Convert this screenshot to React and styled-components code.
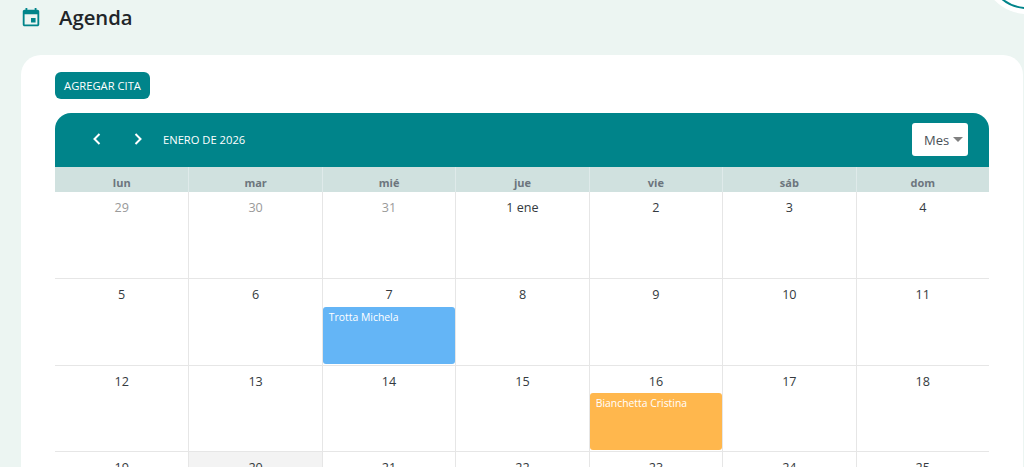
import React from "react";
import styled, { createGlobalStyle } from "styled-components";

const GlobalStyle = createGlobalStyle`
    html, body {
        margin: 0;
        height: 100%;
        overflow: hidden;
        background: #ecf5f2;
        font-family: "Open Sans", "Noto Sans", sans-serif;
    }
`

const Page = styled.div`
    position: relative;
    height: 467px;
    overflow: hidden;
    padding: 0 1px 0 21px;
`

const TopBar = styled.div`
    height: 55px;
    display: flex;
    align-items: flex-start;
`

const PageIcon = styled.svg`
    width: 22px;
    height: 22px;
    margin: 7px 16.75px 0 -0.75px;
    fill: #00848a;
`

const PageTitle = styled.h1`
    margin: 2px 0 0;
    font-size: 20.3px;
    line-height: 30px;
    font-weight: 600;
    color: #212529;
`

const Avatar = styled.div`
    position: absolute;
    top: -71px;
    right: -43px;
    width: 76px;
    height: 76px;
    border-radius: 50%;
    background: #ffffff;
    border: 2px solid #00848a;
    box-shadow: 0 0 0 5px #ffffff;
`

const Card = styled.div`
    background: #ffffff;
    border-radius: 20px 20px 0 0;
    padding: 17px 34px 0;
    height: 412px;
    box-sizing: border-box;
`

const AddButton = styled.button`
    display: block;
    height: 27px;
    width: 95px;
    padding: 0;
    border: none;
    border-radius: 6px;
    background: #00848a;
    color: #ffffff;
    font-family: inherit;
    font-size: 11.2px;
    margin-bottom: 14px;
`

const Calendar = styled.div`
    width: 934px;
`

const Toolbar = styled.div`
    height: 54px;
    background: #00848a;
    border-radius: 16px 16px 0 0;
    display: flex;
    align-items: center;
    padding: 0 21px 0 36px;
`

const NavButton = styled.svg`
    width: 12px;
    height: 14px;
    margin: 0 29px 2px 0;
    fill: none;
    stroke: #ffffff;
    stroke-width: 2;
`

const MonthLabel = styled.div`
    color: #ffffff;
    font-size: 11.2px;
    margin: 0 0 2px -10px;
    flex: 1;
`

const ViewSelect = styled.div`
    width: 56px;
    height: 33px;
    margin-bottom: 1px;
    background: #ffffff;
    border-radius: 3px;
    display: flex;
    align-items: center;
    justify-content: space-between;
    box-sizing: border-box;
    padding: 0 5px 0 12px;
    font-size: 13px;
    color: #495057;
`

const Caret = styled.span`
    width: 0;
    height: 0;
    border-left: 5px solid transparent;
    border-right: 5px solid transparent;
    border-top: 5px solid #808080;
`

const Grid = styled.div`
    display: grid;
    grid-template-columns: repeat(7, 1fr);
`

const WeekDay = styled.div`
    height: 25.4px;
    line-height: 32px;
    background: #d0e1df;
    border-left: ${(p) => (p.$first ? "none" : "1px solid #dfeaea")};
    text-align: center;
    font-size: 11px;
    font-weight: 700;
    color: #6c757d;
    overflow: hidden;
`

const Day = styled.div`
    height: 86.6px;
    box-sizing: border-box;
    border-left: ${(p) => (p.$first ? "none" : "1px solid #e6e6e6")};
    border-bottom: 1px solid #e6e6e6;
    background: ${(p) => (p.$today ? "#f3f3f3" : "#ffffff")};
    display: flex;
    flex-direction: column;
`

const DayNumber = styled.div`
    height: 27.6px;
    line-height: 31px;
    flex: none;
    text-align: center;
    font-size: 12.6px;
    color: ${(p) => (p.$muted ? "#9a9a9a" : "#343a40")};
`

const Appointment = styled.div`
    height: 57px;
    margin: 0 0.5px;
    box-sizing: border-box;
    padding: 3px 5.5px;
    border-radius: 3px;
    background: ${(p) => p.$color};
    color: #ffffff;
    font-size: 10.4px;
    line-height: 15px;
`

const weekDays = ["lun", "mar", "mié", "jue", "vie", "sáb", "dom"];

const days = [
    { label: "29", muted: true }, { label: "30", muted: true }, { label: "31", muted: true },
    { label: "1 ene" }, { label: "2" }, { label: "3" }, { label: "4" },
    { label: "5" }, { label: "6" },
    { label: "7", event: "Trotta Michela", color: "#64b5f6" },
    { label: "8" }, { label: "9" }, { label: "10" }, { label: "11" },
    { label: "12" }, { label: "13" }, { label: "14" }, { label: "15" },
    { label: "16", event: "Bianchetta Cristina", color: "#ffb74d" },
    { label: "17" }, { label: "18" },
    { label: "19" }, { label: "20", today: true }, { label: "21" }, { label: "22" },
    { label: "23" }, { label: "24" }, { label: "25" },
];

const App = () => {
    return (
        <Page>
            <GlobalStyle />
            <Avatar />
            <TopBar>
                <PageIcon viewBox="0 0 24 24">
                    <path d="M17 12h-5v5h5v-5zM16 1v2H8V1H6v2H5c-1.11 0-1.99.9-1.99 2L3 19c0 1.1.89 2 2 2h14c1.1 0 2-.9 2-2V5c0-1.1-.9-2-2-2h-1V1h-2zm3 18H5V8h14v11z" />
                </PageIcon>
                <PageTitle>Agenda</PageTitle>
            </TopBar>
            <Card>
                <AddButton>AGREGAR CITA</AddButton>
                <Calendar>
                    <Toolbar>
                        <NavButton viewBox="0 0 12 14">
                            <path d="M8.5 2 3.5 7l5 5" />
                        </NavButton>
                        <NavButton viewBox="0 0 12 14">
                            <path d="M3.5 2l5 5-5 5" />
                        </NavButton>
                        <MonthLabel>ENERO DE 2026</MonthLabel>
                        <ViewSelect>
                            Mes
                            <Caret />
                        </ViewSelect>
                    </Toolbar>
                    <Grid>
                        {weekDays.map((name, index) => (
                            <WeekDay key={name} $first={index === 0}>{name}</WeekDay>
                        ))}
                        {days.map((day, index) => (
                            <Day key={index} $first={index % 7 === 0} $today={day.today}>
                                <DayNumber $muted={day.muted}>{day.label}</DayNumber>
                                {day.event && <Appointment $color={day.color}>{day.event}</Appointment>}
                            </Day>
                        ))}
                    </Grid>
                </Calendar>
            </Card>
        </Page>
    );
};

export default App;
